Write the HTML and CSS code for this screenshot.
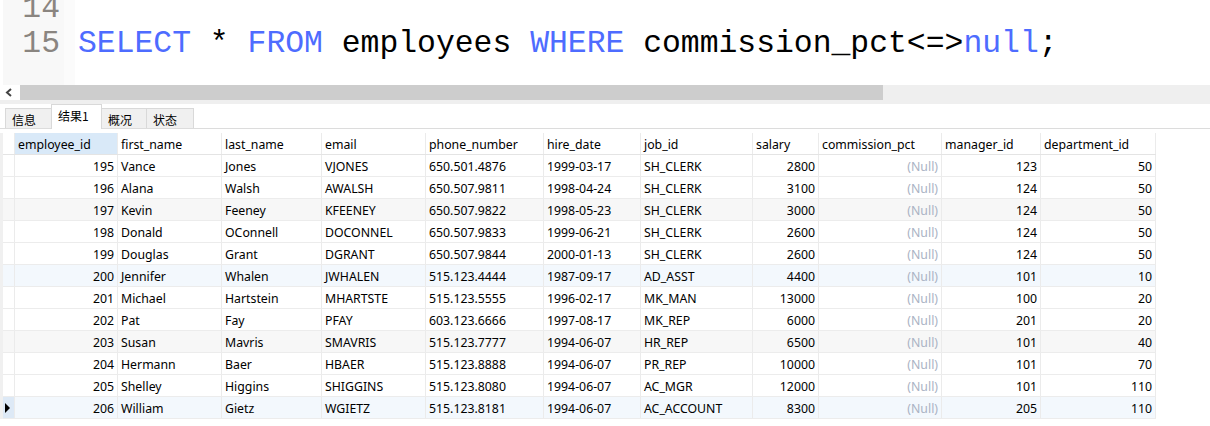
FILE: index.html
```html
<!DOCTYPE html>
<html>
<head>
<meta charset="utf-8">
<link rel="stylesheet" href="styles.css">
</head>
<body>
<div class="editor">
  <div class="gutter">
    <div class="ln">14</div>
    <div class="ln">15</div>
  </div>
  <div class="fold"></div>
  <div class="code">
    <div class="line">&nbsp;</div>
    <div class="line"><span class="kw">SELECT</span> * <span class="kw">FROM</span> employees <span class="kw">WHERE</span> commission_pct&lt;=&gt;<span class="kw">null</span>;</div>
  </div>
</div>
<div class="hscroll">
  <div class="arrow"><svg width="8" height="9" viewBox="0 0 8 9"><path d="M6 1 L2 4.5 L6 8" fill="none" stroke="#444" stroke-width="2"/></svg></div>
  <div class="thumb"></div>
</div>
<div class="tabs">
  <div class="tab">信息</div>
  <div class="tab active">结果1</div>
  <div class="tab">概况</div>
  <div class="tab">状态</div>
</div>
<div class="grid">
  <div class="row head">
    <div class="c rh"></div>
    <div class="c w1 sel">employee_id</div>
    <div class="c w2">first_name</div>
    <div class="c w3">last_name</div>
    <div class="c w4">email</div>
    <div class="c w5">phone_number</div>
    <div class="c w6">hire_date</div>
    <div class="c w7">job_id</div>
    <div class="c w8">salary</div>
    <div class="c w9">commission_pct</div>
    <div class="c w10">manager_id</div>
    <div class="c w11">department_id</div>
  </div>
  <div class="row"><div class="c rh"></div><div class="c w1 r">195</div><div class="c w2">Vance</div><div class="c w3">Jones</div><div class="c w4">VJONES</div><div class="c w5">650.501.4876</div><div class="c w6">1999-03-17</div><div class="c w7">SH_CLERK</div><div class="c w8 r">2800</div><div class="c w9 r nul">(Null)</div><div class="c w10 r">123</div><div class="c w11 r">50</div></div>
  <div class="row"><div class="c rh"></div><div class="c w1 r">196</div><div class="c w2">Alana</div><div class="c w3">Walsh</div><div class="c w4">AWALSH</div><div class="c w5">650.507.9811</div><div class="c w6">1998-04-24</div><div class="c w7">SH_CLERK</div><div class="c w8 r">3100</div><div class="c w9 r nul">(Null)</div><div class="c w10 r">124</div><div class="c w11 r">50</div></div>
  <div class="row alt"><div class="c rh"></div><div class="c w1 r">197</div><div class="c w2">Kevin</div><div class="c w3">Feeney</div><div class="c w4">KFEENEY</div><div class="c w5">650.507.9822</div><div class="c w6">1998-05-23</div><div class="c w7">SH_CLERK</div><div class="c w8 r">3000</div><div class="c w9 r nul">(Null)</div><div class="c w10 r">124</div><div class="c w11 r">50</div></div>
  <div class="row"><div class="c rh"></div><div class="c w1 r">198</div><div class="c w2">Donald</div><div class="c w3">OConnell</div><div class="c w4">DOCONNEL</div><div class="c w5">650.507.9833</div><div class="c w6">1999-06-21</div><div class="c w7">SH_CLERK</div><div class="c w8 r">2600</div><div class="c w9 r nul">(Null)</div><div class="c w10 r">124</div><div class="c w11 r">50</div></div>
  <div class="row"><div class="c rh"></div><div class="c w1 r">199</div><div class="c w2">Douglas</div><div class="c w3">Grant</div><div class="c w4">DGRANT</div><div class="c w5">650.507.9844</div><div class="c w6">2000-01-13</div><div class="c w7">SH_CLERK</div><div class="c w8 r">2600</div><div class="c w9 r nul">(Null)</div><div class="c w10 r">124</div><div class="c w11 r">50</div></div>
  <div class="row hl"><div class="c rh"></div><div class="c w1 r">200</div><div class="c w2">Jennifer</div><div class="c w3">Whalen</div><div class="c w4">JWHALEN</div><div class="c w5">515.123.4444</div><div class="c w6">1987-09-17</div><div class="c w7">AD_ASST</div><div class="c w8 r">4400</div><div class="c w9 r nul">(Null)</div><div class="c w10 r">101</div><div class="c w11 r">10</div></div>
  <div class="row"><div class="c rh"></div><div class="c w1 r">201</div><div class="c w2">Michael</div><div class="c w3">Hartstein</div><div class="c w4">MHARTSTE</div><div class="c w5">515.123.5555</div><div class="c w6">1996-02-17</div><div class="c w7">MK_MAN</div><div class="c w8 r">13000</div><div class="c w9 r nul">(Null)</div><div class="c w10 r">100</div><div class="c w11 r">20</div></div>
  <div class="row"><div class="c rh"></div><div class="c w1 r">202</div><div class="c w2">Pat</div><div class="c w3">Fay</div><div class="c w4">PFAY</div><div class="c w5">603.123.6666</div><div class="c w6">1997-08-17</div><div class="c w7">MK_REP</div><div class="c w8 r">6000</div><div class="c w9 r nul">(Null)</div><div class="c w10 r">201</div><div class="c w11 r">20</div></div>
  <div class="row alt"><div class="c rh"></div><div class="c w1 r">203</div><div class="c w2">Susan</div><div class="c w3">Mavris</div><div class="c w4">SMAVRIS</div><div class="c w5">515.123.7777</div><div class="c w6">1994-06-07</div><div class="c w7">HR_REP</div><div class="c w8 r">6500</div><div class="c w9 r nul">(Null)</div><div class="c w10 r">101</div><div class="c w11 r">40</div></div>
  <div class="row"><div class="c rh"></div><div class="c w1 r">204</div><div class="c w2">Hermann</div><div class="c w3">Baer</div><div class="c w4">HBAER</div><div class="c w5">515.123.8888</div><div class="c w6">1994-06-07</div><div class="c w7">PR_REP</div><div class="c w8 r">10000</div><div class="c w9 r nul">(Null)</div><div class="c w10 r">101</div><div class="c w11 r">70</div></div>
  <div class="row"><div class="c rh"></div><div class="c w1 r">205</div><div class="c w2">Shelley</div><div class="c w3">Higgins</div><div class="c w4">SHIGGINS</div><div class="c w5">515.123.8080</div><div class="c w6">1994-06-07</div><div class="c w7">AC_MGR</div><div class="c w8 r">12000</div><div class="c w9 r nul">(Null)</div><div class="c w10 r">101</div><div class="c w11 r">110</div></div>
  <div class="row hl cur"><div class="c rh"><svg width="6" height="10" viewBox="0 0 6 10"><path d="M0 0 L5 5 L0 10 Z" fill="#000"/></svg></div><div class="c w1 r">206</div><div class="c w2">William</div><div class="c w3">Gietz</div><div class="c w4">WGIETZ</div><div class="c w5">515.123.8181</div><div class="c w6">1994-06-07</div><div class="c w7">AC_ACCOUNT</div><div class="c w8 r">8300</div><div class="c w9 r nul">(Null)</div><div class="c w10 r">205</div><div class="c w11 r">110</div></div>
</div>
</body>
</html>
```

FILE: styles.css
```css
html, body {
  margin: 0;
  padding: 0;
  background: #ffffff;
  width: 1210px;
  height: 426px;
  overflow: hidden;
}

.editor {
  height: 85px;
  display: flex;
  overflow: hidden;
  font-family: "Liberation Mono", monospace;
  font-size: 31.4px;
  line-height: 35px;
}

.gutter {
  width: 61px;
  margin-left: 3px;
  background: #f8f8f8;
  color: #8a8580;
  text-align: right;
  margin-top: -9px;
  box-sizing: border-box;
  padding-right: 4px;
  height: 94px;
  flex: none;
}

.fold {
  width: 11px;
  background: #fbfbfb;
  flex: none;
}

.code {
  margin-top: -9px;
  padding-left: 3px;
  color: #000;
  flex: none;
}

.line {
  white-space: pre;
  height: 35px;
}

.kw {
  color: #4e6cff;
}

.hscroll {
  height: 19px;
  background: #efefef;
  display: flex;
  align-items: flex-start;
}

.arrow {
  width: 20px;
  height: 15px;
  background: #ffffff;
  display: flex;
  align-items: center;
  justify-content: center;
}

.arrow svg {
  margin-left: -2px;
}

.thumb {
  width: 863px;
  height: 15px;
  background: #cdcdcd;
}

.tabs {
  display: flex;
  align-items: flex-end;
  padding-left: 5px;
  border-bottom: 1px solid #dcdcdc;
  font-family: "Noto Sans CJK SC", "Noto Sans", sans-serif;
  font-size: 12px;
  color: #000;
  box-sizing: border-box;
  height: 25px;
}

.tab {
  height: 20px;
  line-height: 21px;
  padding: 0 0 0 6px;
  background: #f0f0f0;
  border: 1px solid #d9d9d9;
  border-bottom: none;
  margin-right: -1px;
  box-sizing: border-box;
  width: 47px;
}

.tab.active {
  height: 25px;
  line-height: 22px;
  background: #ffffff;
  width: 51px;
  margin-bottom: -1px;
  position: relative;
  z-index: 1;
}

.tab:nth-child(3) { width: 46px; }
.tab:nth-child(4) { width: 48px; }

.grid {
  margin-top: 4px;
  font-family: "Noto Sans", sans-serif;
  font-size: 12.3px;
  color: #000;
  border-left: 3px solid #f0f0f0;
  width: 1153px;
}

.row {
  display: flex;
  height: 22px;
  border-bottom: 1px solid #ececec;
  box-sizing: border-box;
  background: #ffffff;
}

.row.head {
  border-bottom: 1px solid #e4e4e4;
}

.row.alt { background: #f7f7f7; }
.row.hl { background: #f3f8fd; }

.c {
  box-sizing: border-box;
  border-right: 1px solid #ebebeb;
  height: 21px;
  line-height: 23px;
  padding: 0 3px;
  white-space: nowrap;
}

.c.r { text-align: right; }
.c.nul { color: #aab3c4; }

.rh {
  width: 12px;
  padding: 0;
  display: flex;
  align-items: center;
  justify-content: center;
}

.row.cur .rh {
  background: #dde9f6;
}

.rh svg { margin-left: -2px; }

.sel { background: #d9e9f8; }

.w1 { width: 103px; }
.w2 { width: 104px; }
.w3 { width: 100px; }
.w4 { width: 104px; }
.w5 { width: 118px; }
.w6 { width: 97px; }
.w7 { width: 112px; }
.w8 { width: 66px; }
.w9 { width: 123px; }
.w10 { width: 99px; }
.w11 { width: 115px; }
```
